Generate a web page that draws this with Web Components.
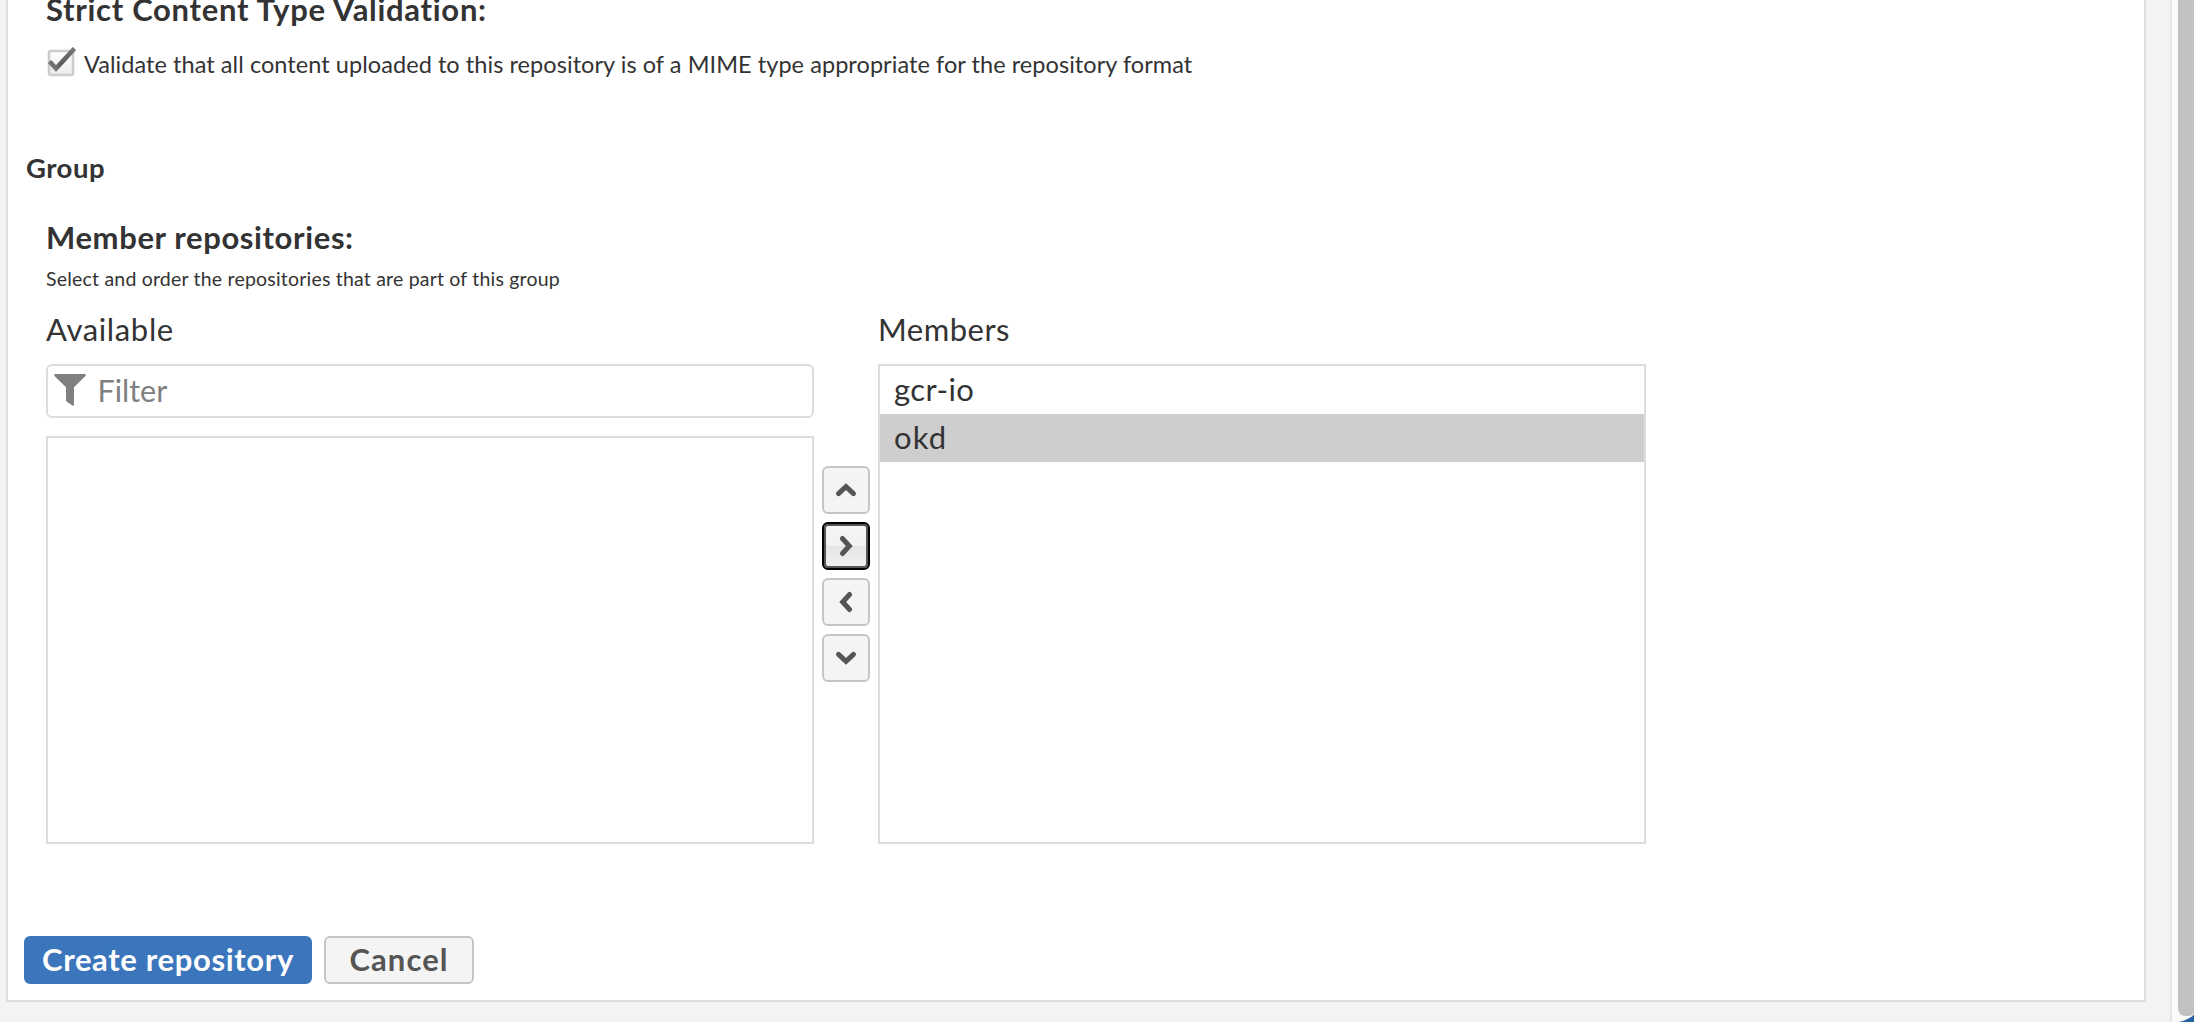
<!DOCTYPE html>
<html lang="en">
<head>
<meta charset="utf-8">
<title>Create repository</title>
<style>
html,body{margin:0;height:1022px;overflow:hidden;background:#f3f3f3}
body{font-family:Lato,"Open Sans",sans-serif;font-size:31px;color:#333}
</style>
</head>
<body>
<app-shell>
  <form-panel>
    <form-text style="--s:31px;--l:18px;--w:700;--k:.7px;margin-left:38px">Strict Content Type Validation:</form-text>
    <check-field>Validate that all content uploaded to this repository is of a MIME type appropriate for the repository format</check-field>
    <form-text style="--s:27.5px;--l:30px;--w:700;--k:.5px;margin:76px 0 0 18px">Group</form-text>
    <form-text style="--s:31px;--l:36px;--w:700;--k:.62px;margin:36px 0 0 38px">Member repositories:</form-text>
    <form-text style="--s:19.5px;--l:24px;--k:.2px;margin:12px 0 0 38px">Select and order the repositories that are part of this group</form-text>
    <item-picker>
      <form-text slot="left" style="--k:.65px">Available</form-text>
      <filter-input slot="left">Filter</filter-input>
      <item-list slot="left" style="height:408px;margin-top:18px"></item-list>
      <move-button slot="mid" dir="up"></move-button>
      <move-button slot="mid" dir="right" focused></move-button>
      <move-button slot="mid" dir="left"></move-button>
      <move-button slot="mid" dir="down"></move-button>
      <form-text slot="right" style="--k:.5px">Members</form-text>
      <item-list slot="right" style="height:480px;margin-top:18px">
        <list-item style="letter-spacing:.4px">gcr-io</list-item>
        <list-item selected style="letter-spacing:1.1px">okd</list-item>
      </item-list>
    </item-picker>
    <button-bar>
      <action-button primary style="width:288px;letter-spacing:.65px">Create repository</action-button>
      <action-button style="width:150px;letter-spacing:1.1px">Cancel</action-button>
    </button-bar>
  </form-panel>
  <scroll-track slot="scroll"></scroll-track>
</app-shell>
<script>
const define = (name, html) => customElements.define(name, class extends HTMLElement {
  constructor() {
    super();
    const t = document.createElement('template');
    t.innerHTML = '<style>:host{box-sizing:border-box}*{box-sizing:border-box}</style>' + html;
    this.attachShadow({ mode: 'open' }).append(t.content.cloneNode(true));
  }
});

define('app-shell', `<style>
:host{display:flex;width:2194px;height:1022px;overflow:hidden;background:#f3f3f3}
main{flex:1;padding-left:6px}
</style><main><slot></slot></main><slot name="scroll"></slot>`);

define('form-panel', `<style>
:host{display:flex;flex-direction:column;width:2140px;height:1002px;background:#fff;border:2px solid #dcdcdc;border-top:0}
</style><slot></slot>`);

define('form-text', `<style>
:host{display:block;white-space:nowrap;font-size:var(--s,31px);line-height:var(--l,36px);font-weight:var(--w,400);letter-spacing:var(--k,0)}
</style><slot></slot>`);

define('check-field', `<style>
:host{display:flex;margin:29px 0 0 38px;height:30px;font-size:23.5px;line-height:30px;letter-spacing:.06px;white-space:nowrap}
svg{display:block;width:30px;height:30px;margin-right:8px}
span{margin-top:2px}
</style>
<svg viewBox="0 0 30 30"><defs><linearGradient id="g" x2="0" y2="1"><stop offset="0" stop-color="#fff"/><stop offset="1" stop-color="#ececec"/></linearGradient>
<linearGradient id="c" x1="0" y1="1" x2="1" y2="0"><stop offset="0" stop-color="#858585"/><stop offset=".35" stop-color="#5c5c5c"/><stop offset="1" stop-color="#777"/></linearGradient></defs>
<rect x="3" y="4" width="24" height="24" rx="2" fill="url(#g)" stroke="#cdcdcd" stroke-width="2.6"/>
<path d="M3.5 14.500L10 21.500L28.500 1.500" fill="none" stroke="url(#c)" stroke-width="4.6"/></svg>
<span><slot></slot></span>`);

define('item-picker', `<style>
:host{display:flex;margin:20px 0 0 38px;height:533px}
section{width:768px;display:flex;flex-direction:column}
nav{width:64px;padding:155px 8px 0;display:flex;flex-direction:column;gap:8px}
filter-input,item-list{flex:none}
::slotted(filter-input),::slotted(item-list:nth-of-type(even)){flex:none}
section{margin-top:0}
::slotted(form-text){height:35px}
</style><section><slot name="left"></slot></section><nav><slot name="mid"></slot></nav><section><slot name="right"></slot></section>`);

define('filter-input', `<style>
:host{display:flex;height:54px;margin-top:18px;border:2px solid #dcdcdc;border-radius:6px;background:#fff;color:#808080;font-size:30.5px;line-height:49px;letter-spacing:0}
svg{display:block;width:32px;height:32px;margin:8px 11.5px 0 6px;flex:none}
</style><svg viewBox="0 0 32 32"><path d="M1.5 0h29q1.5 0 1.3 1.2l-.6 1L20 13.2V30.5q0 1.7-1.6 1.1L12.6 27.4 12 26.4V13.2L.7 2.2Q-.8 0 1.5 0z" fill="#808080"/></svg><slot></slot>`);

define('item-list', `<style>
:host{display:flex;flex-direction:column;flex:none;border:2px solid #dcdcdc;background:#fff}
</style><slot></slot>`);

define('list-item', `<style>
:host{display:block;height:48px;padding-left:14px;line-height:46px}
:host([selected]){background:#cecece}
</style><slot></slot>`);

define('move-button', `<style>
:host{display:flex;align-items:center;justify-content:center;width:48px;height:48px;border:2px solid #c6c6c6;border-radius:6px;background:#f4f4f4}
:host([focused]){border-color:#000;box-shadow:inset 0 0 0 2px #555;background:linear-gradient(#f7f7f7,#f1f1f1 50%,#e6e6e6 50%,#f0f0f0)}
svg{width:24px;height:24px}
:host([dir=right]) svg{transform:rotate(90deg)}
:host([dir=down]) svg{transform:rotate(180deg)}
:host([dir=left]) svg{transform:rotate(270deg)}
</style><svg viewBox="0 0 24 24"><path d="M4.500 15.600L12 8.700L19.500 15.600" fill="none" stroke="#555" stroke-width="5" stroke-linecap="round"/></svg>`);

define('button-bar', `<style>
:host{display:flex;gap:12px;margin:92px 0 0 16px}
</style><slot></slot>`);

define('action-button', `<style>
:host{display:flex;justify-content:center;height:48px;border:2px solid #c6c6c6;border-radius:6px;background:#f4f4f4;color:#555;font-weight:700;line-height:42px;white-space:nowrap}
:host([primary]){border-color:#3b76bc;background:#3b76bc;color:#fff}
</style><slot></slot>`);

define('scroll-track', `<style>
:host{display:block;width:24px;height:1022px;background:#fafafa;border-left:2px solid #e6e6e6}
svg{display:block}
</style><svg width="22" height="1022" viewBox="0 0 22 1022"><path d="M6 0H22V1014Q19 1016 16 1016H14Q6 1016 6 1007Z" fill="#c1c1c1"/><path d="M6 1022Q16 1020.500 22 1014.500V1022Z" fill="#2463a0"/></svg>`);
</script>
</body>
</html>
